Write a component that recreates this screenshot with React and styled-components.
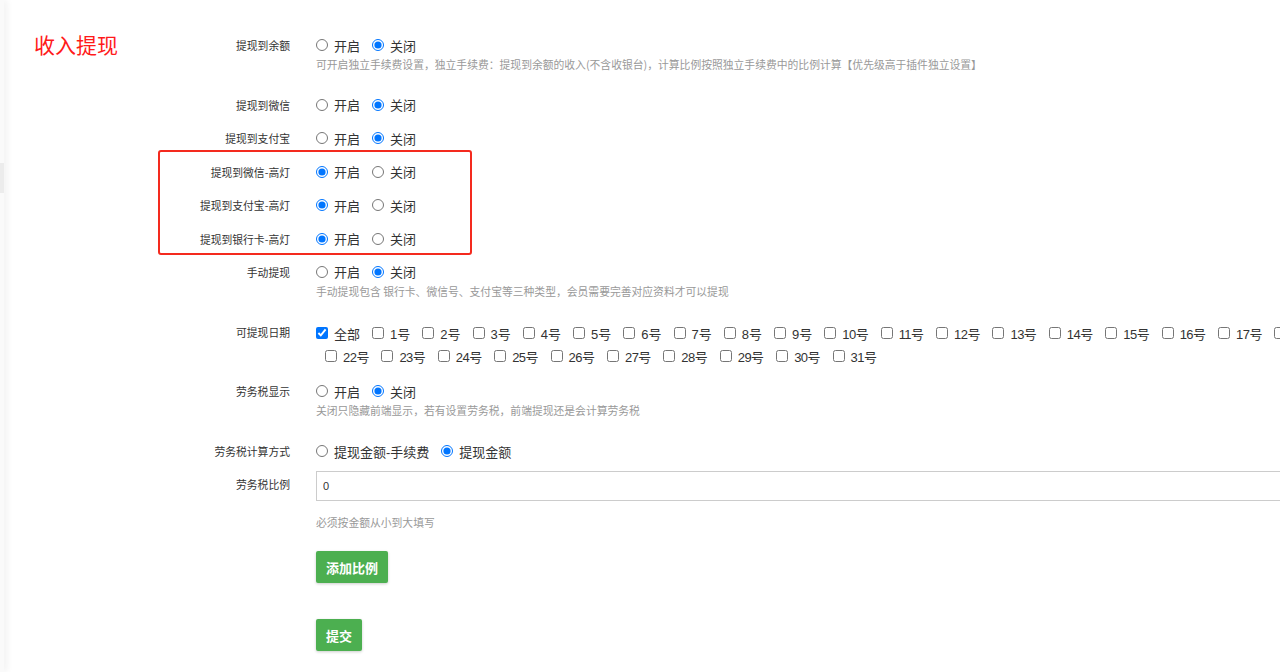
import React from "react";
import styled, { createGlobalStyle } from "styled-components";

const GlobalStyle = createGlobalStyle`
  html, body {
    margin: 0;
    padding: 0;
    background: #fff;
    overflow: hidden;
  }
  body {
    font-family: "Liberation Sans", "Noto Sans CJK SC", sans-serif;
    color: #333;
  }
`;

const days = Array.from({ length: 31 }, (_, i) => i + 1);

function RadioGroup({ name, options, value }) {
  return (
    <Options>
      {options.map((opt) => (
        <Option key={opt}>
          <Radio type="radio" name={name} defaultChecked={opt === value} />
          <span>{opt}</span>
        </Option>
      ))}
    </Options>
  );
}

function FormRow({ label, children, help, space }) {
  return (
    <Row $space={space}>
      <Label>{label}</Label>
      <Control>
        {children}
        {help && <Help>{help}</Help>}
      </Control>
    </Row>
  );
}

function App() {
  const onOff = ["开启", "关闭"];
  return (
    <>
      <GlobalStyle />
      <Shell>
        <Sidebar>
          <SideItem />
        </Sidebar>
        <Main>
          <Title>收入提现</Title>
          <Form>
            <FormRow
              label="提现到余额"
              help="可开启独立手续费设置，独立手续费：提现到余额的收入(不含收银台)，计算比例按照独立手续费中的比例计算【优先级高于插件独立设置】"
            >
              <RadioGroup name="balance" options={onOff} value="关闭" />
            </FormRow>
            <FormRow label="提现到微信">
              <RadioGroup name="wechat" options={onOff} value="关闭" />
            </FormRow>
            <FormRow label="提现到支付宝">
              <RadioGroup name="alipay" options={onOff} value="关闭" />
            </FormRow>
            <Highlight>
              <FormRow label="提现到微信-高灯">
                <RadioGroup name="wechat-gd" options={onOff} value="开启" />
              </FormRow>
              <FormRow label="提现到支付宝-高灯">
                <RadioGroup name="alipay-gd" options={onOff} value="开启" />
              </FormRow>
              <FormRow label="提现到银行卡-高灯">
                <RadioGroup name="bank-gd" options={onOff} value="开启" />
              </FormRow>
            </Highlight>
            <FormRow
              label="手动提现"
              help="手动提现包含 银行卡、微信号、支付宝等三种类型，会员需要完善对应资料才可以提现"
            >
              <RadioGroup name="manual" options={onOff} value="关闭" />
            </FormRow>
            <FormRow label="可提现日期">
              <Days>
                <Day>
                  <Check type="checkbox" defaultChecked />
                  <span>全部</span>
                </Day>
                {days.map((d) => (
                  <Day key={d}>
                    <Check type="checkbox" />
                    <span>
                      <Num $tight={d > 9}>{d}</Num>号
                    </span>
                  </Day>
                ))}
              </Days>
            </FormRow>
            <FormRow
              label="劳务税显示"
              help="关闭只隐藏前端显示，若有设置劳务税，前端提现还是会计算劳务税"
            >
              <RadioGroup name="tax-show" options={onOff} value="关闭" />
            </FormRow>
            <FormRow label="劳务税计算方式" space={10}>
              <RadioGroup
                name="tax-mode"
                options={["提现金额-手续费", "提现金额"]}
                value="提现金额"
              />
            </FormRow>
            <InputRow>
              <Label $top={3}>劳务税比例</Label>
              <Control>
                <TextInput defaultValue="0" />
                <NoteText>必须按金额从小到大填写</NoteText>
                <Button>添加比例</Button>
                <Button $top={36}>提交</Button>
              </Control>
            </InputRow>
          </Form>
        </Main>
      </Shell>
    </>
  );
}

export default App;

const Shell = styled.div`
  display: flex;
  width: 1280px;
  height: 672px;
  overflow: hidden;
`;

const Sidebar = styled.div`
  width: 4px;
  flex-shrink: 0;
  background: #fafafa;
  padding-top: 163px;
  position: relative;
  z-index: 1;
  box-shadow: 2px 0 7px rgba(0, 0, 0, 0.09);
`;

const SideItem = styled.div`
  height: 30px;
  background: #ececec;
`;

const Main = styled.div`
  flex: 1;
  display: flex;
  align-items: flex-start;
  padding: 35px 0 0 30px;
  background: #fff;
  overflow: hidden;
`;

const Title = styled.h2`
  width: 124px;
  flex-shrink: 0;
  margin: 0;
  font-size: 21px;
  font-weight: normal;
  line-height: 18px;
  color: #ff1a1a;
  font-family: "Noto Sans CJK SC", sans-serif;
`;

const Form = styled.div`
  display: flex;
  flex-direction: column;
  flex-shrink: 0;
  width: 1360px;
`;

const Row = styled.div`
  display: flex;
  align-items: flex-start;
  margin-bottom: ${(p) => (p.$space ?? 13.4)}px;
`;

const InputRow = styled(Row)`
  margin-bottom: 0;
`;

const Label = styled.div`
  width: 132px;
  flex-shrink: 0;
  margin-right: 26px;
  padding-top: ${(p) => p.$top || 0}px;
  text-align: right;
  font-size: 10.8px;
  line-height: 20px;
  color: #333;
  font-family: "Noto Sans CJK SC", sans-serif;
`;

const Control = styled.div`
  flex: 1;
  display: flex;
  flex-direction: column;
  align-items: flex-start;
`;

const Options = styled.div`
  display: flex;
  align-items: center;
  height: 20px;
`;

const Option = styled.label`
  display: flex;
  align-items: center;
  gap: 6px;
  margin-right: 12px;
  font-size: 13px;
  color: #333;
`;

const Radio = styled.input`
  width: 12px;
  height: 12px;
  margin: 0;
`;

const Help = styled.div`
  font-size: 10.8px;
  line-height: 18px;
  color: #999;
  margin-bottom: 8.6px;
  font-family: "Noto Sans CJK SC", sans-serif;
  white-space: nowrap;
`;

const Days = styled.div`
  display: flex;
  flex-wrap: wrap;
  width: 1200px;
`;

const Day = styled.label`
  display: flex;
  align-items: center;
  gap: 6px;
  height: 23px;
  margin: 0 3px 0 9px;
  font-size: 13px;
  color: #333;

  &:first-child {
    margin-left: 0;
  }
`;

const Num = styled.span`
  letter-spacing: ${(p) => (p.$tight ? "-0.55px" : "0")};
`;

const Check = styled.input`
  width: 12px;
  height: 12px;
  margin: 0;
`;

const Highlight = styled.div`
  position: relative;

  &::after {
    content: "";
    position: absolute;
    left: 0;
    top: -12px;
    bottom: 7px;
    width: 314px;
    box-sizing: border-box;
    border: 2px solid #f42a1e;
    border-radius: 3px;
    pointer-events: none;
  }
`;

const TextInput = styled.input`
  box-sizing: border-box;
  width: 1100px;
  height: 30px;
  border: 1px solid #ccc;
  padding: 0 6px;
  font-size: 11px;
  color: #333;
  font-family: "Liberation Sans", sans-serif;
  outline: none;
`;

const NoteText = styled(Help)`
  margin: 12px 0 0;
`;

const Button = styled.button`
  margin-top: ${(p) => p.$top || 20}px;
  height: 32px;
  padding: 0 10px;
  border: none;
  border-radius: 2px;
  background: #4caf50;
  color: #fff;
  font-size: 13px;
  font-weight: bold;
  font-family: "Noto Sans CJK SC", sans-serif;
  box-shadow: 0 1px 3px rgba(0, 0, 0, 0.2);
  cursor: pointer;
`;
